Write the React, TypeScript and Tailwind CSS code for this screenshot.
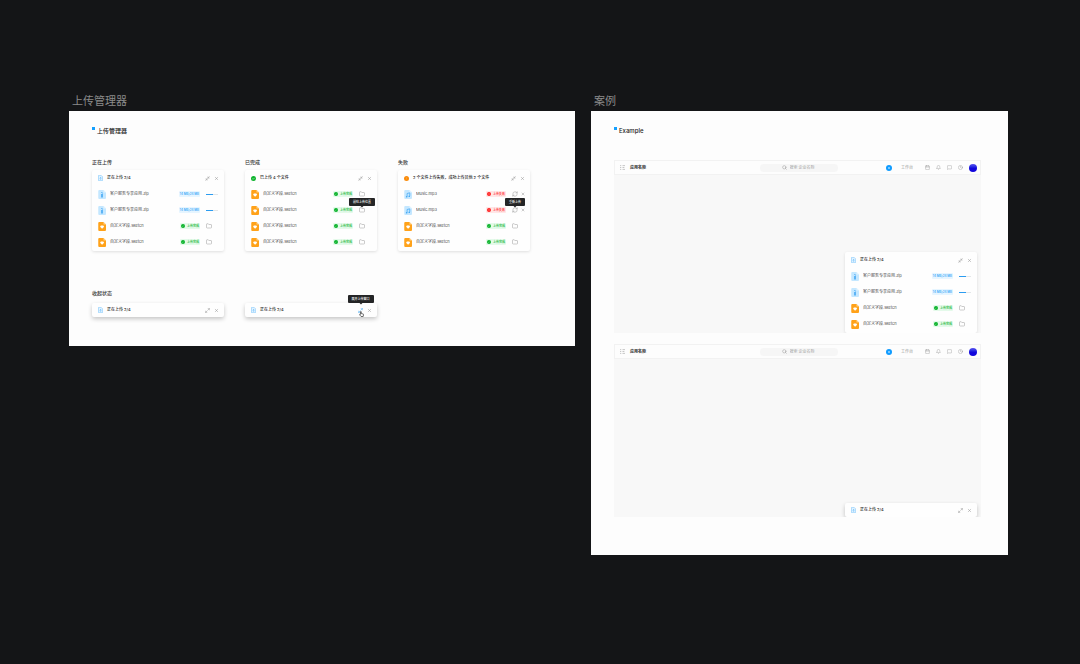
import type { ReactNode } from 'react'
import { Bell, Calendar, Clock, Folder, Maximize2, MessageSquare, Minimize2, RefreshCw, Search, X } from 'lucide-react'
import clsx from 'clsx'

type FileType = 'zip' | 'sketch' | 'music'
type FileStatus = 'uploading' | 'done' | 'failed'

interface FileItem {
  name: string
  type: FileType
  status: FileStatus
  tip?: string
}

const zip: FileItem = { name: '客户服务专享应用.zip', type: 'zip', status: 'uploading' }
const sketch: FileItem = { name: '自定义字段.sketch', type: 'sketch', status: 'done' }
const music: FileItem = { name: 'Music.mp3', type: 'music', status: 'failed' }

const uploadingFiles = [zip, zip, sketch, sketch]
const doneFiles = [sketch, { ...sketch, tip: '前往上传位置' }, sketch, sketch]
const failedFiles = [music, { ...music, tip: '重新上传' }, sketch, sketch]

function FileIcon({ type }: { type: FileType }) {
  const orange = type === 'sketch'
  return (
    <svg viewBox="0 0 16 18" className="h-[9px] w-2 shrink-0">
      <path d="M2.5 0H11l5 5v11a2 2 0 0 1-2 2H2.5a2 2 0 0 1-2-2V2a2 2 0 0 1 2-2z" fill={orange ? '#ffa21a' : '#c4e7ff'} />
      <path d="M11 0l5 5h-4a1 1 0 0 1-1-1z" fill={orange ? '#ffd18a' : '#e3f4ff'} />
      {type === 'sketch' && <path d="M5.800 7.200h4.800l1.700 2.200-4.100 4-4.100-4z" fill="#fff" />}
      {type === 'zip' && <path d="M6.500 4h2v1.500h-2zM8 5.500h1.500V7H8zM6.500 8h3v7h-3z" fill="#3ba4f4" />}
      {type === 'music' && (
        <path d="M6.2 13V7l5.3-1.4v6" fill="none" stroke="#3ba4f4" strokeWidth="1.4" />
      )}
      {type === 'music' && <path d="M3.8 13a1.6 1.6 0 1 0 3 0 1.6 1.6 0 0 0-3 0zM9 11.8a1.6 1.6 0 1 0 3 0 1.6 1.6 0 0 0-3 0z" fill="#3ba4f4" />}
    </svg>
  )
}

function StateIcon({ state }: { state: FileStatus }) {
  if (state === 'uploading') {
    return (
      <svg viewBox="0 0 10 12" className="h-[6px] w-[5px] shrink-0" fill="none" stroke="#4bb0fa">
        <path d="M1 .8h5.400L9.200 3.600V11.200H1z" fill="#e2f3ff" strokeWidth=".8" />
        <path d="M5.200 9.500V5M3.300 6.800l1.900-1.900 1.900 1.900" />
      </svg>
    )
  }
  return (
    <svg viewBox="0 0 10 10" className="size-[5px] shrink-0">
      <circle cx="5" cy="5" r="5" fill={state === 'done' ? '#0bb32b' : '#fa8c0c'} />
      {state === 'done' ? (
        <path d="M2.800 5.200l1.600 1.500 2.800-3" fill="none" stroke="#fff" />
      ) : (
        <path d="M5 2.500v3.300M5 6.800v.8" stroke="#ffb45c" />
      )}
    </svg>
  )
}

function Tooltip({ className = 'mb-px', children }: { className?: string; children: ReactNode }) {
  return (
    <span
      role="tooltip"
      className={clsx(
        'absolute bottom-full left-1/2 z-10 flex h-2 -translate-x-1/2 items-center rounded-[1px] bg-[#242526] px-1 text-[3px] leading-1 font-medium whitespace-nowrap text-white after:absolute after:-bottom-px after:left-1/2 after:size-[2px] after:-translate-x-1/2 after:rotate-45 after:bg-[#242526]',
        className
      )}
    >
      {children}
    </span>
  )
}

function StatusTag({ status }: { status: FileStatus }) {
  if (status === 'uploading') {
    return <span className="flex h-[6px] items-center rounded-[1px] bg-[#e6f5ff] px-px text-[3px] font-semibold text-[#3aa9f8]">14 MB/24 MB</span>
  }
  const done = status === 'done'
  return (
    <span
      className={clsx(
        'flex h-[6px] items-center gap-[2px] rounded-[1px] px-px text-[3px] font-medium',
        done ? 'bg-[#e4faea] text-[#0bb32b]' : 'bg-[#ffe6e6] text-[#ff1f1f]'
      )}
    >
      <svg viewBox="0 0 8 8" className="size-1">
        <circle cx="4" cy="4" r="4" fill="currentColor" />
        <path d={done ? 'M2.300 4.100l1.200 1.200 2.200-2.400' : 'M2.800 2.800l2.400 2.400M5.200 2.800L2.800 5.200'} stroke="#fff" strokeWidth=".5" fill="none" />
      </svg>
      {done ? '上传完成' : '上传失败'}
    </span>
  )
}

function FileRow({ file }: { file: FileItem }) {
  return (
    <li className="flex h-4 items-center pr-[5px] pl-[6px]">
      <FileIcon type={file.type} />
      <span className="ml-1 flex-1 truncate text-[#4a4a4a]">{file.name}</span>
      <StatusTag status={file.status} />
      <div className="ml-[6px] flex w-[13px] items-center justify-between text-[#9a9a9a]">
        {file.status === 'uploading' ? (
          <div role="progressbar" aria-valuenow={58} className="h-px w-3 bg-[#e3e6e8]">
            <div className="h-px bg-[#2c9cf0]" style={{ width: `${(14 / 24) * 100}%` }} />
          </div>
        ) : (
          <button type="button" className="relative block" aria-label={file.status === 'done' ? '前往上传位置' : '重新上传'}>
            {file.status === 'done' ? <Folder className="size-[6px]" strokeWidth={2} /> : <RefreshCw className="size-[6px]" strokeWidth={2} />}
            {file.tip && <Tooltip>{file.tip}</Tooltip>}
          </button>
        )}
        {file.status === 'failed' && (
          <button type="button" aria-label="移除">
            <X className="size-1" strokeWidth={3} />
          </button>
        )}
      </div>
    </li>
  )
}

interface UploadCardProps {
  state?: FileStatus
  title: string
  files?: FileItem[]
  hovered?: boolean
}

function UploadCard({ state = 'uploading', title, files, hovered }: UploadCardProps) {
  const Toggle = files ? Minimize2 : Maximize2
  return (
    <div
      className={clsx(
        'rounded-[2px] bg-[#fefefe] text-[4px] leading-[6px]',
        files ? 'shadow-[0_1px_3px_#0000001f]' : 'shadow-[0_2px_4px_#00000038]'
      )}
    >
      <div className={clsx('flex items-center pr-[5px] pl-[6px]', files ? 'h-4' : 'h-[14px]')}>
        <StateIcon state={state} />
        <h4 className="ml-1 flex-1 font-medium whitespace-nowrap text-[#222]">{title}</h4>
        <div className="flex items-center gap-1 text-[#858585]">
          <button type="button" aria-label={files ? '收起' : '展开'} className={clsx('relative block', hovered && 'text-[#2c9cf0]')}>
            <Toggle className="size-[5px]" strokeWidth={2} />
            {hovered && <Tooltip className="mb-[5px]">展开上传窗口</Tooltip>}
            {hovered && (
              <svg viewBox="0 0 12 14" className="absolute top-[3px] left-px z-10 h-[6px] w-[5px]">
                <path d="M3.500 8V2a1 1 0 0 1 2 0v4l4.500 1a1.500 1.500 0 0 1 1 1.500L10 13H5L1.500 9a1 1 0 0 1 2-1z" fill="#fff" stroke="#111" strokeWidth="1.400" />
              </svg>
            )}
          </button>
          <button type="button" aria-label="关闭">
            <X className="size-[5px]" strokeWidth={2} />
          </button>
        </div>
      </div>
      {files && (
        <ul className="pb-px">
          {files.map((file, i) => (
            <FileRow key={i} file={file} />
          ))}
        </ul>
      )}
    </div>
  )
}

function Board({ label, title, className, children }: { label: string; title: string; className: string; children: ReactNode }) {
  return (
    <section className={className}>
      <h1 className="mb-1 pl-[3px] text-[11px] leading-3 text-[#8b8b8b]">{label}</h1>
      <div className="bg-[#fdfdfd] pt-4 pl-[23px]">
        <h2 className="flex gap-[2px] text-[6px] leading-2 font-medium text-[#222]">
          <span className="size-[3px] bg-[#14a0ff]" />
          {title}
        </h2>
        {children}
      </div>
    </section>
  )
}

function Column({ title, children }: { title: string; children: ReactNode }) {
  return (
    <div>
      <h3 className="mb-1 text-[5px] leading-2 font-medium text-[#333]">{title}</h3>
      {children}
    </div>
  )
}

function AppWindow({ children }: { children: ReactNode }) {
  return (
    <div className="text-[4px] leading-[6px]">
      <header className="grid h-[15px] grid-cols-[1fr_auto_1fr] items-center border border-[#f2f2f2] pr-[3px] pl-[5px]">
        <div className="flex items-center gap-[5px]">
          <svg viewBox="0 0 8 8" className="size-[5px]" fill="none" stroke="#a5a5a5">
            <path d="M0 1h2M4 1h4M0 4h2M4 4h3M0 7h2M4 7h4" />
          </svg>
          <span className="font-semibold text-[#333]">应用名称</span>
        </div>
        <label className="flex h-2 w-[78px] items-center justify-center gap-[3px] rounded-full bg-[#f6f6f6]">
          <Search className="size-[5px] text-[#8a8a8a]" strokeWidth={2} />
          <input type="text" aria-label="搜索" placeholder="搜索 企业名称" className="h-[6px] w-[26px] bg-transparent outline-none placeholder:text-[#a3a3a3]" />
        </label>
        <nav className="flex items-center justify-end gap-[6px] text-[#9a9a9a]">
          <button type="button" aria-label="新建" className="mr-[3px]">
            <svg viewBox="0 0 12 12" className="size-[6px]">
              <circle cx="6" cy="6" r="6" fill="#109cff" />
              <path d="M6 4v4M4 6h4" stroke="#fff" />
            </svg>
          </button>
          <a href="#" className="mr-[6px]">工作台</a>
          <Calendar className="size-[5px]" strokeWidth={2} />
          <Bell className="size-[5px]" strokeWidth={2} />
          <MessageSquare className="size-[5px]" strokeWidth={2} />
          <Clock className="size-[5px]" strokeWidth={2} />
          <span className="size-2 rounded-full bg-linear-to-b from-[#5a50f0] to-[#1206dc] to-50%" />
        </nav>
      </header>
      <main className="flex h-[158px] items-end justify-end overflow-hidden bg-[#f8f8f8] pr-1">
        <div className="w-[132px]">{children}</div>
      </main>
    </div>
  )
}

export default function App() {
  return (
    <div className="min-h-screen bg-[#141517] pt-[95px] pr-[72px] pl-[69px] font-['Inter','Noto_Sans_CJK_SC',sans-serif]">
      <div className="flex items-start gap-4">
        <Board label="上传管理器" title="上传管理器" className="flex-[506]">
          <div className="mt-[23px] grid grid-cols-3 gap-x-[21px] pr-[45px]">
            <Column title="正在上传">
              <UploadCard title="正在上传 2/4" files={uploadingFiles} />
            </Column>
            <Column title="已完成">
              <UploadCard state="done" title="已上传 4 个文件" files={doneFiles} />
            </Column>
            <Column title="失败">
              <UploadCard state="failed" title="2 个文件上传失败，成功上传其他 2 个文件" files={failedFiles} />
            </Column>
          </div>
          <h3 className="mt-[38px] mb-[6px] text-[5px] leading-2 font-medium text-[#333]">收起状态</h3>
          <div className="grid grid-cols-3 gap-x-[21px] pr-[45px] pb-[29px]">
            <UploadCard title="正在上传 2/4" />
            <UploadCard title="正在上传 2/4" hovered />
          </div>
        </Board>

        <Board label="案例" title="Example" className="flex-[417]">
          <div className="mt-[25px] space-y-[11px] pr-[27px] pb-[38px]">
            <AppWindow>
              <UploadCard title="正在上传 2/4" files={uploadingFiles} />
            </AppWindow>
            <AppWindow>
              <UploadCard title="正在上传 2/4" />
            </AppWindow>
          </div>
        </Board>
      </div>
    </div>
  )
}
